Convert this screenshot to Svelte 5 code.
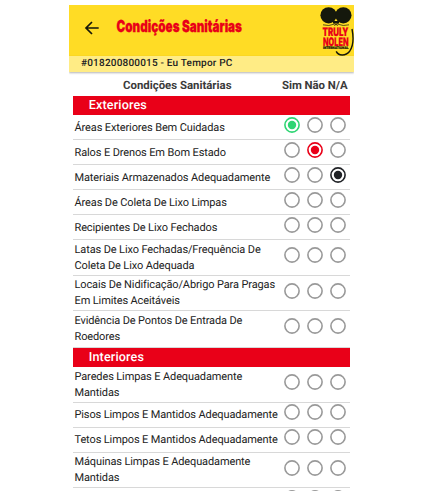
<script>
  const groups = [
    {
      title: 'Exteriores',
      rows: [
        { lines: ['Áreas Exteriores Bem Cuidadas'], h: 25, pick: 0 },
        { lines: ['Ralos E Drenos Em Bom Estado'], h: 25, pick: 1 },
        { lines: ['Materiais Armazenados Adequadamente'], h: 25, pick: 2 },
        { lines: ['Áreas De Coleta De Lixo Limpas'], h: 25 },
        { lines: ['Recipientes De Lixo Fechados'], h: 25 },
        { lines: ['Latas De Lixo Fechadas/Frequência De', 'Coleta De Lixo Adequada'], h: 35.5 },
        { lines: ['Locais De Nidificação/Abrigo Para Pragas', 'Em Limites Aceitáveis'], h: 35.5 },
        { lines: ['Evidência De Pontos De Entrada De', 'Roedores'], h: 36.5 }
      ]
    },
    {
      title: 'Interiores',
      rows: [
        { lines: ['Paredes Limpas E Adequadamente', 'Mantidas'], h: 36 },
        { lines: ['Pisos Limpos E Mantidos Adequadamente'], h: 25 },
        { lines: ['Tetos Limpos E Mantidos Adequadamente'], h: 25 },
        { lines: ['Máquinas Limpas E Adequadamente', 'Mantidas'], h: 35.5 },
        { lines: [], h: 25 }
      ]
    }
  ];
  const colors = ['#2ed573', '#e90018', '#202226'];
</script>

<main class="app">
  <header class="bar">
    <svg class="back" width="16" height="16" viewBox="0 0 16 16" fill="none" stroke="#15160a" stroke-width="1.7">
      <path d="M14.7 8H2.2M8 2 2 8l6 6" />
    </svg>
    <svg class="title" width="130" height="26" viewBox="0 0 130 26">
      <text x="0.5" y="19.2" textLength="125.5" lengthAdjust="spacingAndGlyphs">Condições Sanitárias</text>
    </svg>
    <svg class="logo" width="34" height="50" viewBox="0 0 34 50">
      <g fill="#15180c">
        <ellipse cx="8.6" cy="9.3" rx="8.2" ry="8.1" />
        <ellipse cx="23.3" cy="9.3" rx="8.2" ry="8.1" />
        <path d="M13 15h6v2.5h-6z" />
      </g>
      <path d="M3 18.8Q9 20.5 14 18.2M18 18.2Q23 20.5 29 18.8M14 17.5l4 2M18 17.5l-4 2" fill="none" stroke="#15180c" stroke-width=".7" />
      <path d="M32 23C33.4 30 33.6 39.5 29.7 45.2 25.8 50 18.5 50.3 16.2 45.4" fill="none" stroke="#15180c" stroke-width="1.4" />
      <g class="brand">
        <text x="2.5" y="30.1" textLength="26" lengthAdjust="spacingAndGlyphs">TRULY</text>
        <text x="3" y="39.5" textLength="25.5" lengthAdjust="spacingAndGlyphs">NOLEN</text>
      </g>
      <text class="tiny" x="3" y="43.4" textLength="25.5" lengthAdjust="spacingAndGlyphs">INTERNATIONAL</text>
    </svg>
  </header>
  <div class="sub">#018200800015 - Eu Tempor PC</div>
  <section class="table">
    <div class="head">
      <span class="name">Condições Sanitárias</span>
      <span class="cols">Sim Não N/A</span>
    </div>
    {#each groups as group}
      <h2>{group.title}</h2>
      {#each group.rows as row}
        <div class="row" class:tall={row.h > 30} style:height="{row.h}px">
          <div class="label">
            {#each row.lines as line}<div>{line}</div>{/each}
          </div>
          <div class="radios">
            {#each colors as color, i}
              <svg width="16" height="16" viewBox="0 0 16 16">
                <circle cx="8" cy="8" r="7.1" fill="none" stroke={row.pick === i ? color : '#999'} stroke-width="1.6" />
                {#if row.pick === i}<circle cx="8" cy="8" r="4.2" fill={color} />{/if}
              </svg>
            {/each}
          </div>
        </div>
      {/each}
    {/each}
  </section>
</main>

<style>
  :global(body) {
    background: #fff;
  }
  .app {
    width: 285px;
    height: 485.5px;
    margin: 5px 0 0 69px;
    overflow: hidden;
    font-family: Roboto, 'Liberation Sans', sans-serif;
    color: #222;
    text-rendering: geometricPrecision;
  }
  .bar {
    display: flex;
    align-items: flex-start;
    height: 51px;
    background: #ffdc25;
  }
  .bar svg {
    overflow: visible;
  }
  .back {
    margin: 15px 0 0 15px;
  }
  .title {
    margin: 8px 0 0 16px;
  }
  .title text {
    font: 900 16.5px Inter, Roboto, sans-serif;
    fill: #e90018;
    stroke: #e90018;
    stroke-width: 0.3px;
  }
  .logo {
    margin: 1px 0 0 auto;
  }
  .brand text {
    font: 900 11.8px Inter, Roboto, sans-serif;
    fill: #e90018;
    stroke: #e90018;
    stroke-width: 0.2px;
  }
  .logo .tiny {
    font: 900 3.6px Roboto, 'Liberation Sans', sans-serif;
    fill: #15180c;
    stroke: #15180c;
    stroke-width: 0.2px;
  }
  .sub {
    position: relative;
    height: 16px;
    padding-left: 12px;
    background: #ffec85;
    box-shadow: 0 1px 2px rgba(0, 0, 0, 0.3);
    font-size: 10px;
    font-weight: 500;
    line-height: 16.6px;
    letter-spacing: 0.2px;
    white-space: nowrap;
  }
  .table {
    width: 277px;
    margin-left: 4px;
  }
  .head {
    display: flex;
    height: 24px;
    line-height: 27px;
    font-size: 11.4px;
    font-weight: 700;
    color: #3b3b3b;
    white-space: nowrap;
  }
  .name {
    width: 159px;
    padding-left: 50px;
  }
  .cols {
    letter-spacing: -0.05px;
  }
  h2 {
    box-sizing: border-box;
    height: 19px;
    margin: 0;
    padding-left: 15.7px;
    background: #e90018;
    color: #fff;
    font-size: 12.6px;
    font-weight: 500;
    line-height: 19.4px;
    letter-spacing: 0.15px;
  }
  .row {
    box-sizing: border-box;
    display: flex;
    border-bottom: 1px solid #d8d8d8;
  }
  .label {
    box-sizing: border-box;
    display: flex;
    flex-direction: column;
    justify-content: center;
    width: 209.5px;
    padding: 1px 0 0 1.5px;
    font-size: 11px;
    line-height: 15.8px;
    letter-spacing: -0.12px;
    white-space: nowrap;
  }
  .radios {
    display: flex;
    gap: 7px;
    height: 16px;
    padding: 1.7px 0 0 1px;
  }
  .tall .radios {
    padding-top: 7px;
  }
</style>
